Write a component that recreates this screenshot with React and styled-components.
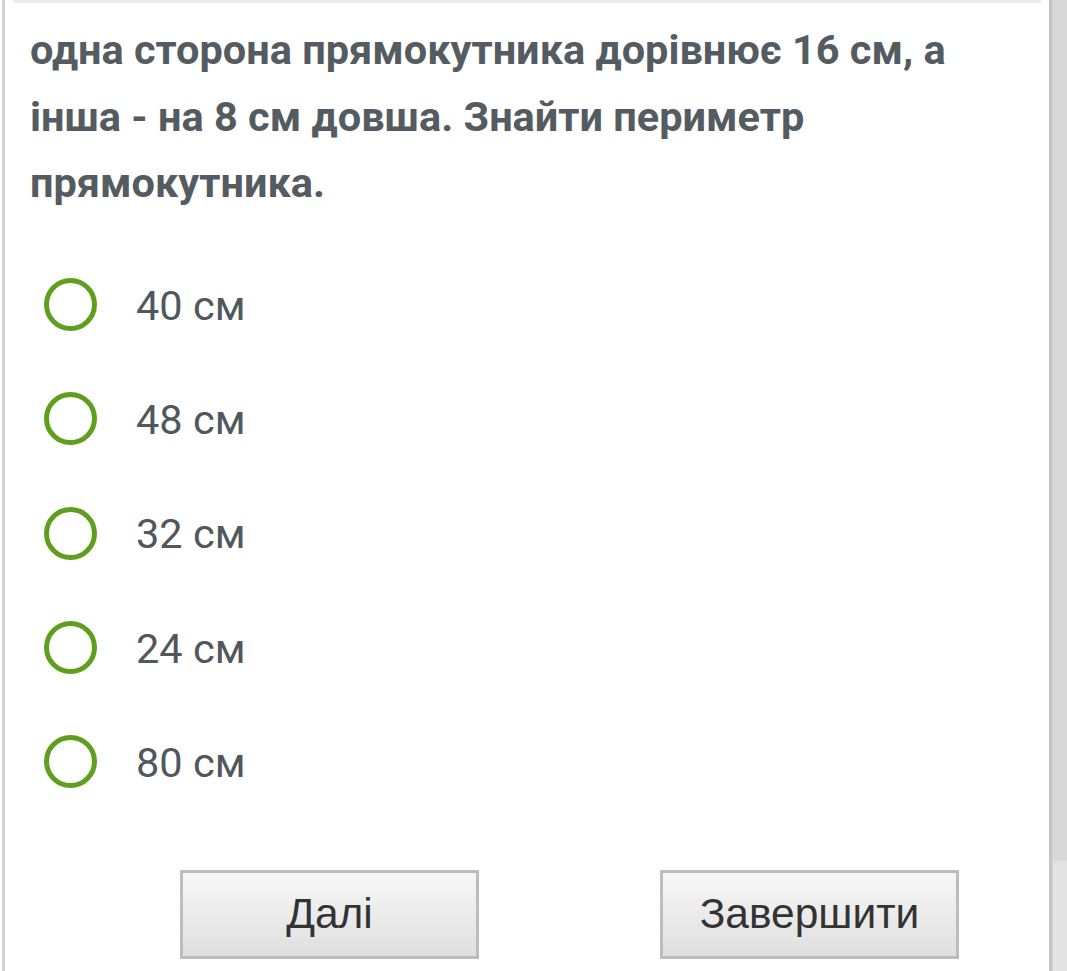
import React from "react";
import styled, { createGlobalStyle } from "styled-components";

const Global = createGlobalStyle`
  html, body { margin: 0; padding: 0; background: #ffffff; }
  body { font-family: Roboto, "Noto Sans", sans-serif; }
`;

const Page = styled.div`
  display: flex;
  height: 971px;
  overflow: hidden;
  background: #ffffff;
`;

const Main = styled.main`
  flex: 1;
  margin-left: 2px;
  border-left: 3px solid #d2d2d2;
  display: flex;
  flex-direction: column;
  background: #ffffff;
`;

const TopRule = styled.div`
  height: 3px;
  margin: 0 8px 0 8px;
  background: #ececec;
`;

const Question = styled.h2`
  margin: 14px 40px 0 25px;
  font-family: Roboto, "Noto Sans", sans-serif;
  font-weight: 700;
  font-size: 41.5px;
  line-height: 66.5px;
  color: #545b61;
`;

const Options = styled.ul`
  list-style: none;
  margin: 31px 0 0 0;
  padding: 0 0 0 39px;
  display: flex;
  flex-direction: column;
`;

const Option = styled.li`
  height: 114.25px;
  display: flex;
  align-items: center;
  gap: 39px;
`;

const Radio = styled.span`
  box-sizing: border-box;
  width: 53px;
  height: 53px;
  border-radius: 50%;
  border: 5.5px solid #5f9f1d;
  flex: none;
`;

const OptionText = styled.span`
  font-family: Roboto, "Noto Sans", sans-serif;
  font-size: 41.5px;
  color: #50575d;
  line-height: 1;
  padding-top: 2px;
`;

const Buttons = styled.div`
  display: flex;
  gap: 181px;
  padding-left: 175px;
  margin-top: 51px;
`;

const Button = styled.button`
  box-sizing: border-box;
  width: 299px;
  height: 89px;
  border: 3px solid #bdbdbd;
  border-radius: 0;
  background: linear-gradient(#f7f7f7, #dfdfdf);
  font-family: "Liberation Sans", Arial, sans-serif;
  font-size: 42.5px;
  color: #333333;
  padding: 0;
  cursor: pointer;
`;

const Side = styled.aside`
  width: 18px;
  flex: none;
  display: flex;
  flex-direction: column;
  border-left: 2px solid #c3c3c3;
  box-sizing: border-box;
`;

const Track = styled.div`
  flex: ${(p) => (p.$grow ? 1 : "none")};
  height: ${(p) => (p.$grow ? "auto" : "110px")};
  background: ${(p) => p.$bg};
  border-left: 2px solid #cdcdcd;
`;

const answers = ["40 см", "48 см", "32 см", "24 см", "80 см"];

export default function App() {
  return (
    <>
      <Global />
      <Page>
        <Main>
          <TopRule />
          <Question>
            одна сторона прямокутника дорівнює 16 см, а інша - на 8 см довша. Знайти периметр прямокутника.
          </Question>
          <Options>
            {answers.map((a) => (
              <Option key={a}>
                <Radio />
                <OptionText>{a}</OptionText>
              </Option>
            ))}
          </Options>
          <Buttons>
            <Button>Далі</Button>
            <Button>Завершити</Button>
          </Buttons>
        </Main>
        <Side>
          <Track $grow $bg="#d9d9d9" />
          <Track $bg="#e3e3e3" />
        </Side>
      </Page>
    </>
  );
}
